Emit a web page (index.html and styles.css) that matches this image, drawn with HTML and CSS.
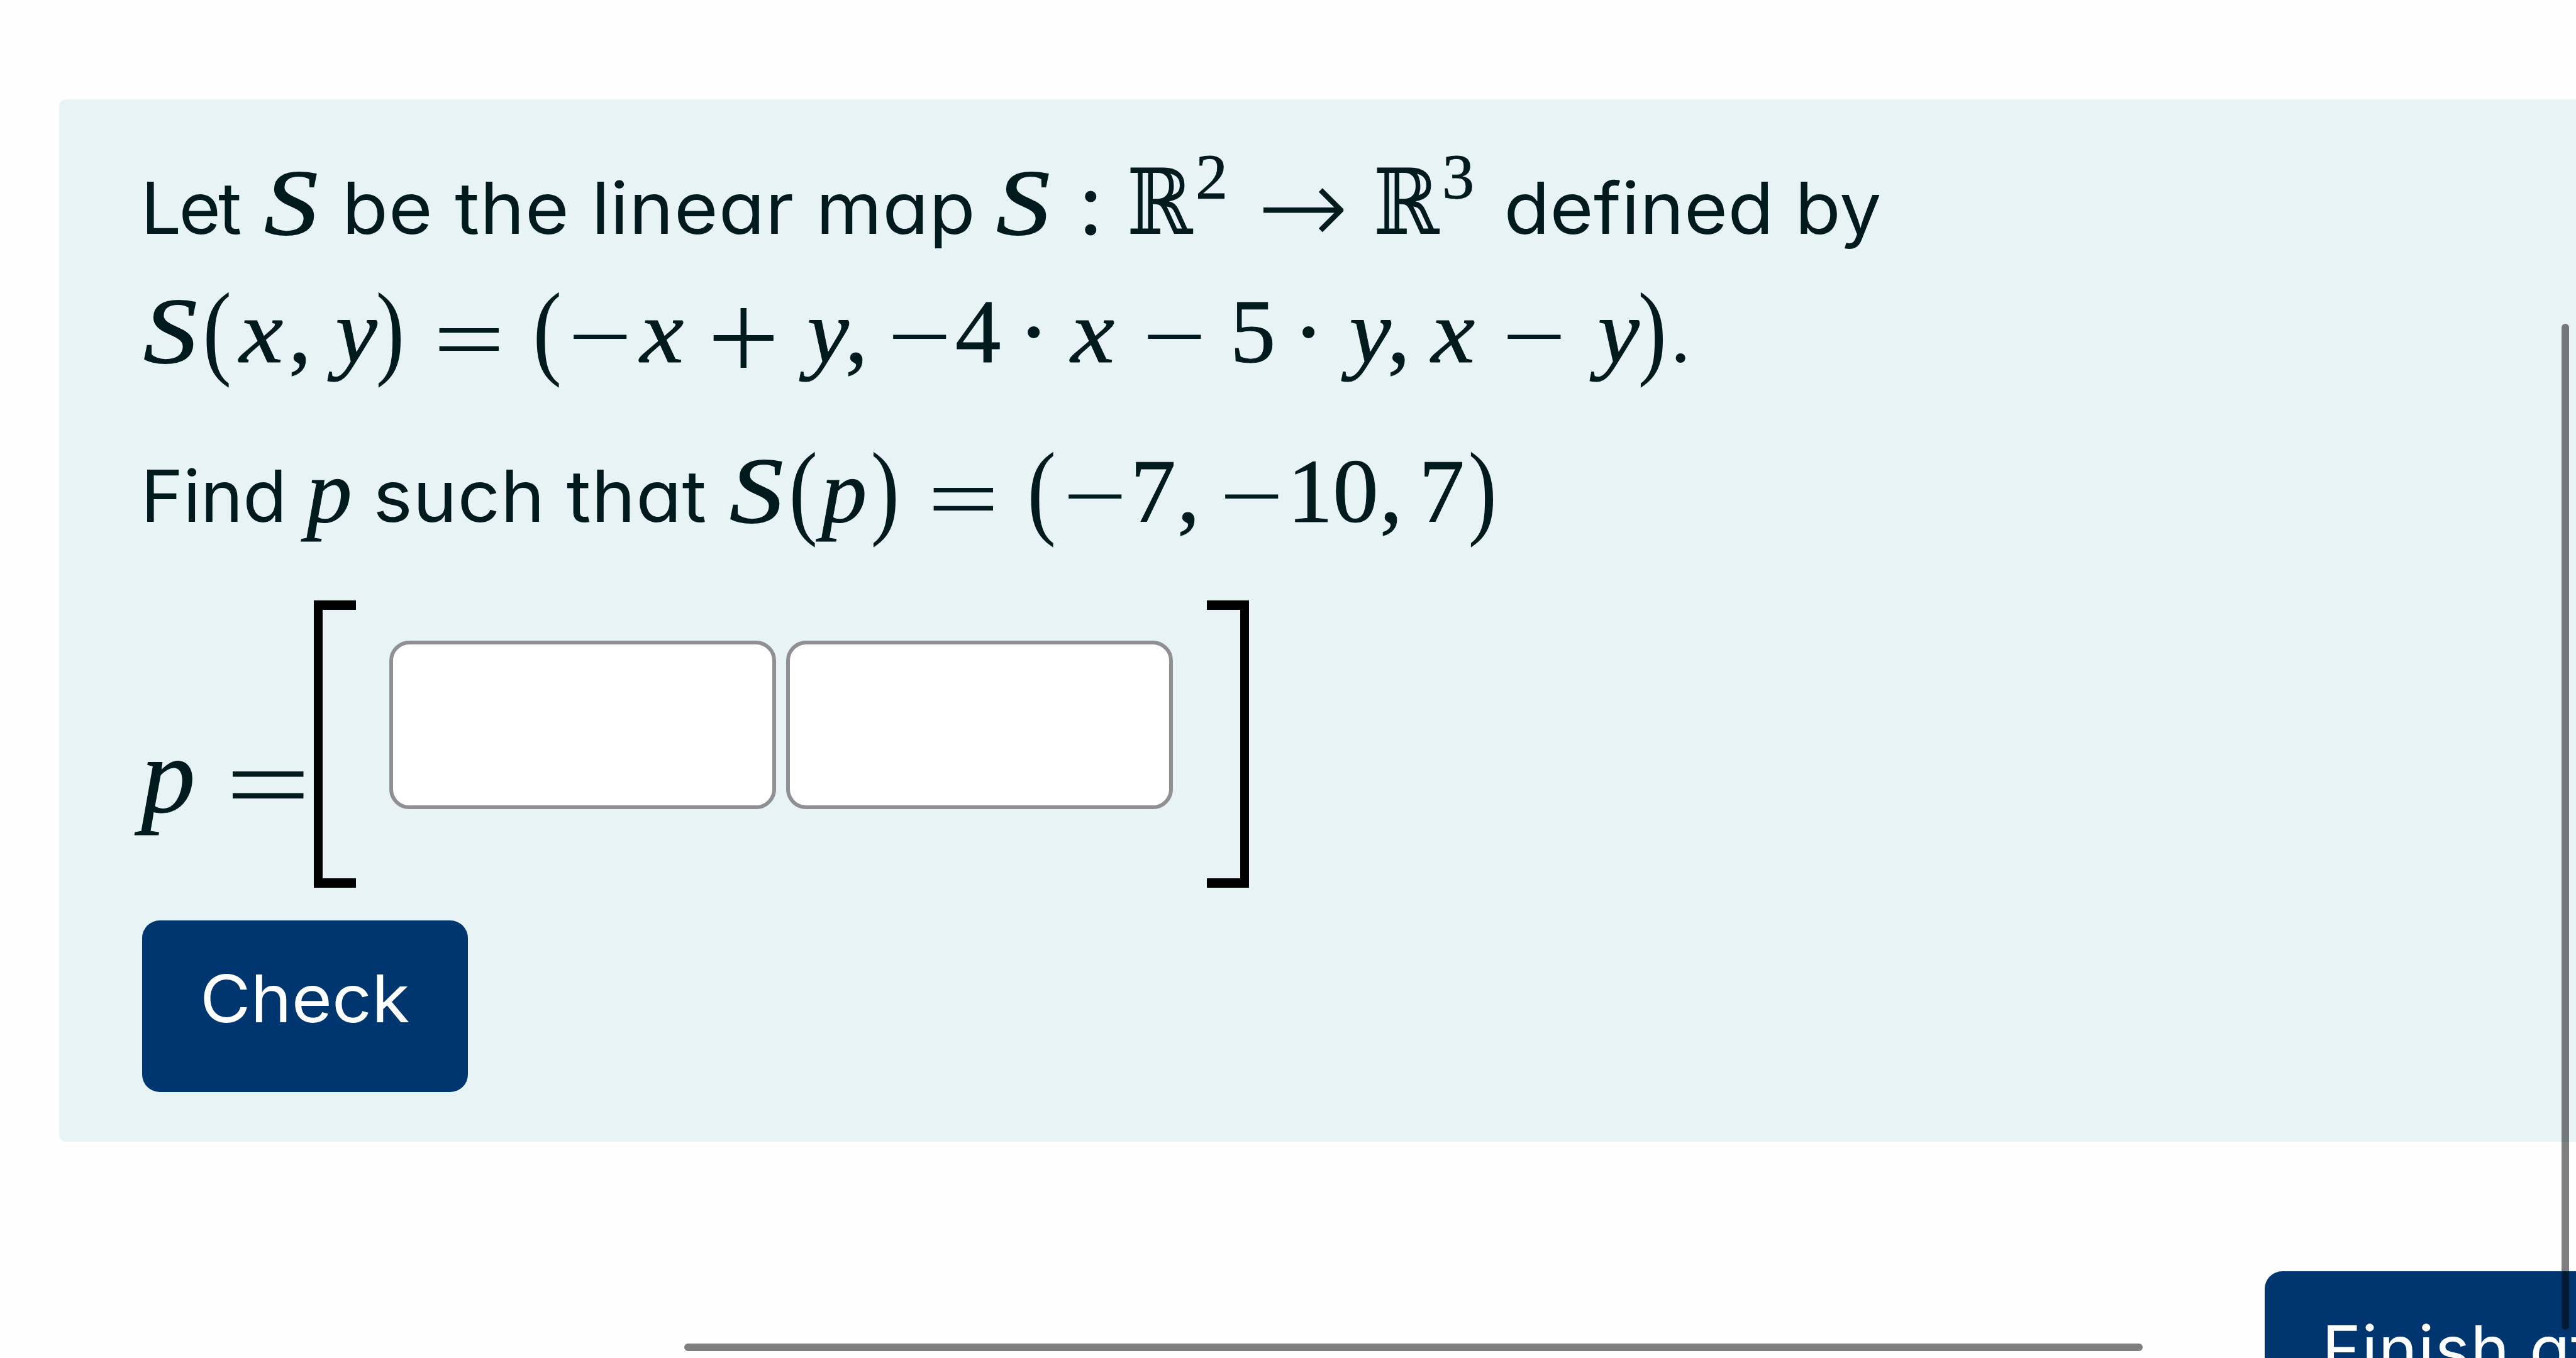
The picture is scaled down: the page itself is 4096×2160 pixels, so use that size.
FILE: index.html
```
<!DOCTYPE html>
<html lang="en">
<head>
<meta charset="utf-8">
<title>Linear map question</title>
<link rel="stylesheet" href="styles.css">
</head>
<body>
<main class="page">
  <section class="question">
    <p class="row">
      <span class="run run-let">Let</span>
      <span class="math"><i class="t cap">S</i></span>
      <span class="run run-map">be the linear map</span>
      <span class="math"><i class="t cap">S</i><b class="t colon">:</b><b class="t real">ℝ</b><b class="t sup">2</b><b class="t arrow">→</b><b class="t real">ℝ</b><b class="t sup">3</b></span>
      <span class="run run-defined">defined by</span>
    </p>
    <p class="row">
      <span class="math"><i class="t cap">S</i><b class="t paren">(</b><i class="t x">x</i><b class="t comma">,</b><i class="t y">y</i><b class="t paren">)</b><b class="t rel">=</b><b class="t paren">(</b><b class="t neg">−</b><i class="t x">x</i><b class="t plus">+</b><i class="t y">y</i><b class="t comma">,</b><b class="t neg">−</b><b class="t digit">4</b><b class="t dot">·</b><i class="t x">x</i><b class="t bin">−</b><b class="t digit">5</b><b class="t dot">·</b><i class="t y">y</i><b class="t comma">,</b><i class="t x">x</i><b class="t bin">−</b><i class="t y">y</i><b class="t paren">)</b></span>
      <span class="run">.</span>
    </p>
    <p class="row row-find">
      <span class="run run-find">Find</span>
      <span class="math"><i class="t p">p</i></span>
      <span class="run run-such">such that</span>
      <span class="math"><i class="t cap">S</i><b class="t paren">(</b><i class="t p">p</i><b class="t paren">)</b><b class="t rel">=</b><b class="t paren">(</b><b class="t neg">−</b><b class="t digit">7</b><b class="t comma">,</b><b class="t neg">−</b><b class="t digit">1</b><b class="t digit">0</b><b class="t comma">,</b><b class="t digit">7</b><b class="t paren">)</b></span>
    </p>
    <div class="answer">
      <span class="math math-large"><i class="t p">p</i><b class="t rel">=</b></span>
      <div class="matrix">
        <span class="bracket bracket-left"></span>
        <input class="field" type="text" aria-label="First coordinate">
        <input class="field" type="text" aria-label="Second coordinate">
        <span class="bracket bracket-right"></span>
      </div>
    </div>
    <button class="button" type="button"><span class="label">Check</span></button>
  </section>
  <footer class="footer">
    <button class="button button-finish" type="button">Finish attempt ...</button>
  </footer>
  <div class="scrollbar scrollbar-vertical"></div>
  <div class="scrollbar scrollbar-horizontal"></div>
</main>
</body>
</html>
```
FILE: styles.css
```
* { box-sizing: border-box; }

body {
  margin: 0;
  background: #fefefe;
  color: #001a1e;
  font-family: Inter, "Open Sans", sans-serif;
  font-feature-settings: "cv11";
}

.page {
  position: relative;
  width: 4096px;
  height: 2160px;
  padding-top: 158px;
  overflow: hidden;
}

.question {
  height: 1658px;
  margin-left: 94px;
  padding: 73px 0 0 130px;
  border-radius: 12px 0 0 12px;
  background: #e7f3f5;
}

.row {
  display: flex;
  align-items: baseline;
  height: 200px;
  margin: 0;
  font-size: 114px;
  line-height: 200px;
  white-space: nowrap;
}
.row-find { margin-top: 54px; }

.run { flex: none; transform-origin: left; }
.run-let { width: 192px; letter-spacing: -4px; }
.run-map { width: 1071px; padding-left: 33px; letter-spacing: .9px; transform: scaleX(1.05); }
.run-defined { padding-left: 37px; letter-spacing: .4px; transform: scaleX(1.04); }
.run-find { width: 263px; }
.run-such { width: 596px; padding-left: 32px; letter-spacing: .7px; transform: scaleX(1.04); }

/* Formula tokens: each box has the advance width of its symbol. */
.math {
  --em: 144.9px;
  display: flex;
  flex: none;
  align-items: baseline;
  font-family: "Liberation Serif", serif;
  font-size: var(--em);
  line-height: 1;
  -webkit-text-stroke: 1px currentColor;
}
.math-large { --em: 172.6px; }

.t {
  display: flex;
  flex: none;
  justify-content: center;
  font-weight: 400;
}
.cap {
  width: calc(var(--em) * .645);
  font-size: calc(var(--em) * 1.03);
  transform: translateY(.01em) scaleX(1.14);
  -webkit-text-stroke-width: 1.8px;
}
.x { width: calc(var(--em) * .572); transform: scaleX(1.08); }
.y { width: calc(var(--em) * .49); transform: translateX(.07em) scaleX(1.03); }
.p { width: calc(var(--em) * .503); }
.digit { width: calc(var(--em) * .5); }
.paren {
  width: calc(var(--em) * .389);
  font-size: calc(var(--em) * 1.15);
  transform: translateY(.03em) scaleX(.82);
  -webkit-text-stroke-width: 0;
}
.comma { width: calc(var(--em) * .445); padding-right: calc(var(--em) * .167); }
.neg,
.bin {
  font-size: calc(var(--em) * 1.2);
  transform: translateY(.1em) scale(1.04, .75);
  -webkit-text-stroke-width: 0;
}
.neg { width: calc(var(--em) * .778); }
.bin { width: calc(var(--em) * 1.222); }
.plus {
  width: calc(var(--em) * 1.222);
  font-family: Inter, sans-serif;
  font-size: calc(var(--em) * 1.52);
  font-weight: 200;
  line-height: 0;
  transform: translateY(.11em);
  -webkit-text-stroke-width: 0;
}
.rel {
  width: calc(var(--em) * 1.334);
  transform: translateY(.085em) scaleX(1.4);
  -webkit-text-stroke-width: 0;
}
.dot { width: calc(var(--em) * .722); -webkit-text-stroke-width: 2px; }
.colon { width: calc(var(--em) * .834); }
.real {
  width: calc(var(--em) * .722);
  font-family: "DejaVu Math TeX Gyre", "DejaVu Sans", serif;
  transform: scaleX(.87);
  -webkit-text-stroke-width: 0;
}
.sup {
  width: calc(var(--em) * .427);
  padding-right: calc(var(--em) * .05);
  font-size: calc(var(--em) * .707);
  transform: translateY(-.55em);
}
.arrow {
  width: calc(var(--em) * 1.556);
  font-family: "DejaVu Sans", sans-serif;
  font-size: calc(var(--em) * 1.2);
  font-weight: 200;
  line-height: 0;
  transform: translate(-2px, .1em);
  -webkit-text-stroke-width: 0;
}

.answer {
  display: flex;
  align-items: flex-start;
  height: 457px;
  margin-top: 70px;
}
.answer .math { width: 275px; padding-top: 192px; }

.matrix {
  display: flex;
  align-items: flex-start;
  height: 457px;
}
.bracket {
  width: 67px;
  height: 457px;
  border: 15px solid #000;
}
.bracket-left { margin-right: 53px; border-right: 0; border-left-width: 14px; }
.bracket-right { margin-left: 38px; border-left: 0; border-right-width: 14px; }

.field {
  width: 615px;
  height: 268px;
  margin: 64px 16px 0 0;
  padding: 0 30px;
  border: 6px solid #8f8f94;
  border-radius: 32px;
  background: #fff;
  font: inherit;
  font-size: 105px;
}

.button {
  display: block;
  width: 518px;
  height: 273px;
  margin: 52px 0 0 2px;
  padding: 0 0 26px;
  border: 0;
  border-radius: 28px;
  background: #00366f;
  color: #fff;
  font-family: inherit;
  font-feature-settings: inherit;
  font-size: 105px;
  line-height: 247px;
  white-space: nowrap;
}
.label { display: inline-block; transform: scaleX(1.05); }

.footer {
  padding: 206px 0 0 3601px;
}
.button-finish {
  width: 1100px;
  margin: 0;
  padding-left: 91px;
  letter-spacing: 1.2px;
  text-align: left;
}

.scrollbar {
  position: absolute;
  border-radius: 6px;
  background: rgba(0, 0, 0, .5);
}
.scrollbar-vertical { left: 4073px; top: 515px; width: 12px; height: 1600px; }
.scrollbar-horizontal { left: 1088px; top: 2137px; width: 2319px; height: 12px; }
```
